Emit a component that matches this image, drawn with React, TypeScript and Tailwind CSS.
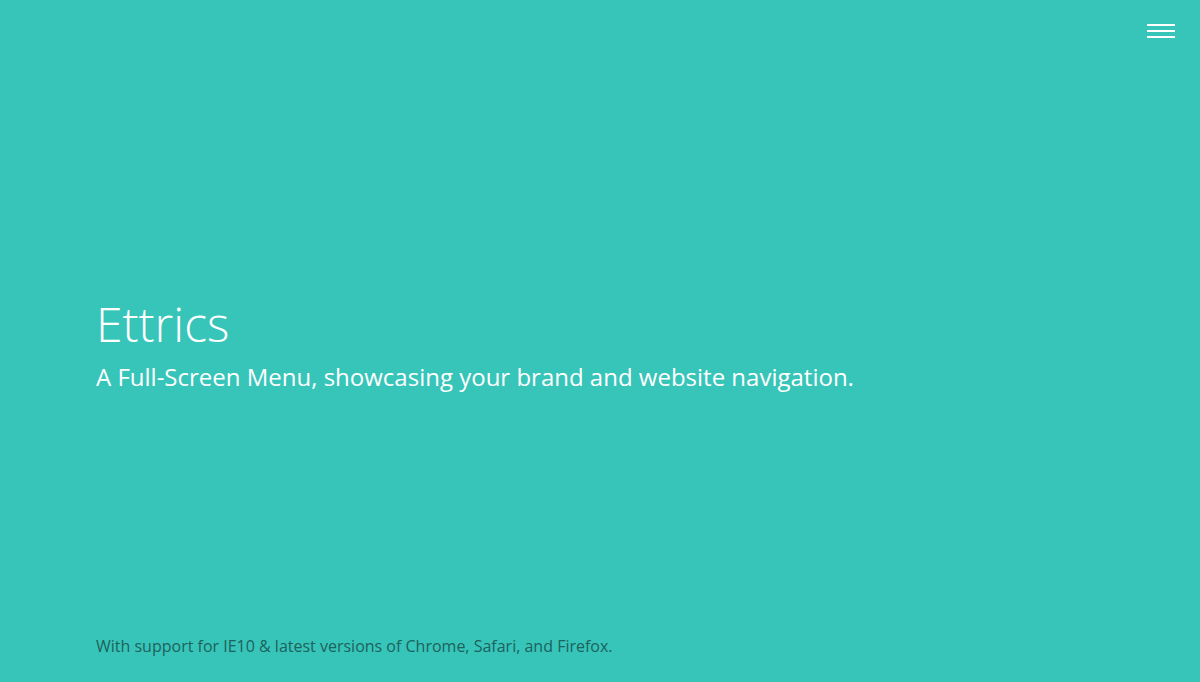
export default function App() {
  return (
    <div
      className="flex h-[682px] flex-col bg-[#37c5b9] text-white"
      style={{ fontFamily: '"Open Sans", "Noto Sans", sans-serif' }}
    >
      <header className="flex justify-end px-[25px] pt-[24px]">
        <button type="button" aria-label="Menu" className="flex w-[28px] flex-col gap-[4px]">
          <span className="h-[2px] w-full bg-white" />
          <span className="h-[2px] w-full bg-white" />
          <span className="h-[2px] w-full bg-white" />
        </button>
      </header>

      <main className="flex flex-1 flex-col justify-center px-[96px] pt-[15px]">
        <h1 className="text-[48px] font-light leading-[1.25]">Ettrics</h1>
        <p className="mt-[7px] text-[24px] leading-[1.3]">
          A Full-Screen Menu, showcasing your brand and website navigation.
        </p>
      </main>

      <footer className="px-[96px] pb-[24px]">
        <p className="text-[16px] text-[#1d625c]">
          With support for IE10 &amp; latest versions of Chrome, Safari, and Firefox.
        </p>
      </footer>
    </div>
  );
}
